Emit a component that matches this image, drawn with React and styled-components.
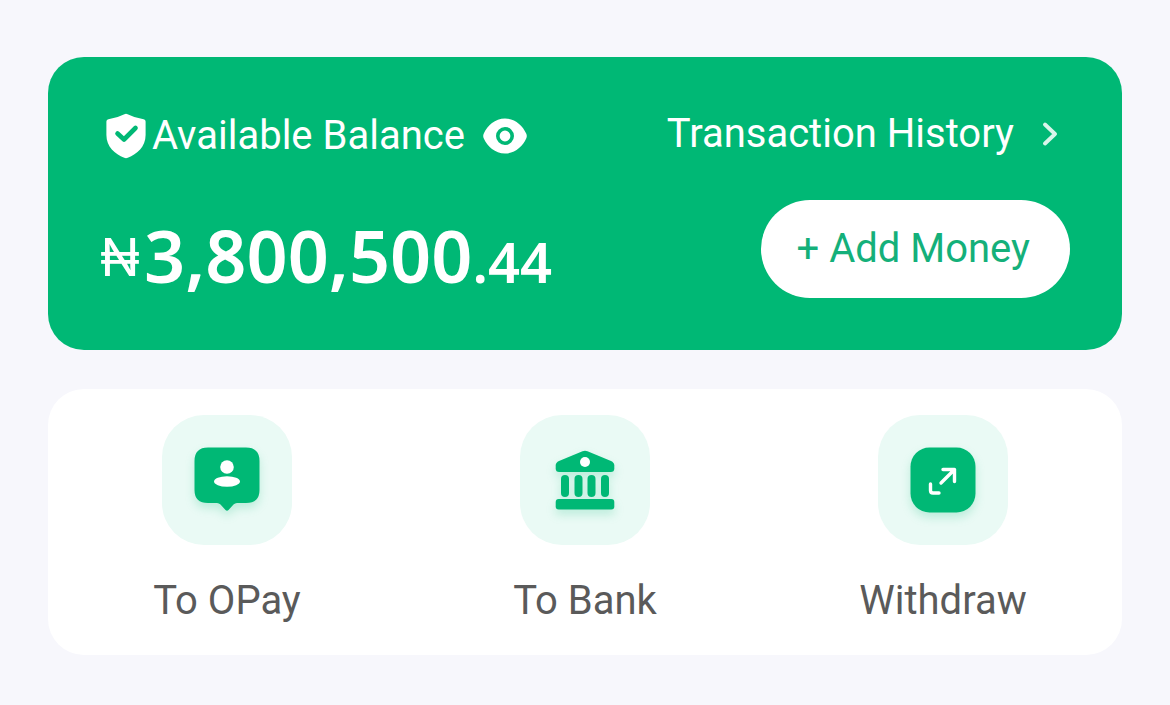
import { useState } from 'react';
import styled, { createGlobalStyle, css } from 'styled-components';

const GlobalStyle = createGlobalStyle`
	:root {
		--color-brand: #00b875;
		--color-brand-text: #14b07a;
		--color-brand-tint: #eafaf5;
		--color-page: #f7f7fc;
		--color-label: #5a5a5a;
		--radius-card: 36px;
	}

	* {
		box-sizing: border-box;
	}

	body {
		margin: 0;
		background-color: var(--color-page);
		font-family: Roboto, 'Liberation Sans', sans-serif;
		font-size: 40px;
		line-height: 48px;
	}

	button {
		font: inherit;
		border: none;
		padding: 0;
		background: none;
		cursor: pointer;
	}
`;

const Page = styled.main`
	display: flex;
	flex-direction: column;
	gap: 39px;
	padding: 57px 48px 50px;
`;

const BalanceCard = styled.section`
	display: flex;
	flex-direction: column;
	gap: 36px;
	padding: 51px 52px 52px;
	border-radius: var(--radius-card);
	background-color: var(--color-brand);
	color: #fff;
`;

const CardRow = styled.div`
	display: flex;
	align-items: flex-end;
	justify-content: space-between;

	${(props) =>
		props.$inset &&
		css`
			align-items: center;
			min-height: 56px;
			padding: 0 12px 0 6px;
		`}
`;

const BalanceLabel = styled.div`
	display: flex;
	align-items: center;
	gap: 6px;
`;

const EyeButton = styled.button`
	display: flex;
	margin-left: 12px;
`;

const HistoryLink = styled.a`
	display: flex;
	align-items: center;
	gap: 28px;
	padding-bottom: 4px;
	color: inherit;
	text-decoration: none;
`;

const Amount = styled.p`
	display: flex;
	align-items: baseline;
	margin: 0;
	font-family: 'Noto Sans', 'Open Sans', sans-serif;
	font-size: 72px;
	line-height: 74px;
	font-weight: 600;
`;

const Currency = styled.span`
	align-self: center;
	margin-right: 4px;
	font-family: Inter, sans-serif;
	font-size: 52px;
	font-weight: 400;
`;

const Cents = styled.span`
	font-size: 56px;
`;

const AddMoney = styled.button`
	padding: 25px 40px 25px 36px;
	border-radius: 49px;
	background-color: #fff;
	color: var(--color-brand-text);
`;

const Actions = styled.nav`
	display: grid;
	grid-template-columns: repeat(3, 1fr);
	padding: 26px 0 30px;
	border-radius: var(--radius-card);
	background-color: #fff;
`;

const Action = styled.a`
	display: flex;
	flex-direction: column;
	align-items: center;
	gap: 32px;
	color: var(--color-label);
	text-decoration: none;
`;

const Tile = styled.span`
	display: grid;
	place-items: center;
	width: 130px;
	height: 130px;
	border-radius: 42px;
	background-color: var(--color-brand-tint);

	& svg {
		filter: drop-shadow(0 5px 5px rgba(0, 184, 117, 0.2));
	}
`;

function ShieldIcon() {
	return (
		<svg width="40" height="46" viewBox="0 0 40 46" aria-hidden="true">
			<path
				fill="#fff"
				d="M18.4 1.2Q20 .4 21.6 1.2Q29 5 37.6 6.2Q39.6 6.6 39.6 8.6V22C39.6 34 31 41 21.8 44.8Q20 45.6 18.2 44.8C9 41 .4 34 .4 22V8.6Q.4 6.6 2.4 6.2Q11 5 18.4 1.2Z"
			/>
			<path
				d="M11.5 20.5L18 26.5L29.5 15"
				fill="none"
				stroke="var(--color-brand)"
				strokeWidth="4.6"
				strokeLinecap="round"
				strokeLinejoin="round"
			/>
		</svg>
	);
}

function EyeIcon() {
	return (
		<svg width="44" height="36" viewBox="0 0 44 36" aria-hidden="true">
			<path
				fill="#fff"
				d="M22 .5C32 .5 39.5 7.5 43.2 15.5Q44.4 18 43.2 20.5C39.5 28.5 32 35.5 22 35.5S4.5 28.5.8 20.5Q-.4 18 .8 15.5C4.5 7.5 12 .5 22 .5Z"
			/>
			<circle cx="22" cy="18" r="7.2" fill="none" stroke="var(--color-brand)" strokeWidth="3.6" />
		</svg>
	);
}

function ChevronIcon() {
	return (
		<svg width="16" height="24" viewBox="0 0 16 24" aria-hidden="true">
			<path
				d="M3 2.5L13 12L3 21.5"
				fill="none"
				stroke="#fff"
				strokeOpacity="0.85"
				strokeWidth="3.8"
				strokeLinecap="round"
				strokeLinejoin="round"
			/>
		</svg>
	);
}

function OpayIcon() {
	return (
		<svg width="66" height="66" viewBox="0 0 66 66" aria-hidden="true">
			<path
				fill="var(--color-brand)"
				d="M14 .5H52Q65.5 .5 65.5 14V43Q65.5 56 52 56H43Q41 56 39.5 57.5L34.5 63Q33 64.5 31.5 63L26.5 57.5Q25 56 23 56H14Q.5 56 .5 43V14Q.5 .5 14 .5Z"
			/>
			<circle cx="33" cy="20" r="6.8" fill="#fff" />
			<ellipse cx="33" cy="34.5" rx="13" ry="5.2" fill="#fff" />
		</svg>
	);
}

function BankIcon() {
	return (
		<svg width="60" height="60" viewBox="0 0 60 60" aria-hidden="true">
			<g fill="var(--color-brand)">
				<path d="M27.5 1.3Q30 .3 32.5 1.3L56 11Q59.3 12.5 59.3 15.5V18.5Q59.3 22 55.8 22H4.2Q.7 22 .7 18.5V15.5Q.7 12.5 4 11Z" />
				<rect x="6" y="25" width="8" height="22" rx="4" />
				<rect x="19.5" y="25" width="8" height="22" rx="4" />
				<rect x="32.5" y="25" width="8" height="22" rx="4" />
				<rect x="46" y="25" width="8" height="22" rx="4" />
				<rect x=".7" y="49" width="58.6" height="10.5" rx="3" />
			</g>
			<circle cx="30" cy="12" r="5" fill="#fff" />
		</svg>
	);
}

function WithdrawIcon() {
	return (
		<svg width="66" height="66" viewBox="0 0 66 66" aria-hidden="true">
			<rect x=".5" y=".5" width="65" height="65" rx="19" fill="var(--color-brand)" />
			<g fill="none" stroke="#fff" strokeWidth="3.4" strokeLinecap="round" strokeLinejoin="round">
				<path d="M33 22.5H44.5V34.5M44.5 22.5L31 36" />
				<path d="M20.5 37V43.5Q20.5 46 23 46H29" />
			</g>
		</svg>
	);
}

const actions = [
	{ label: 'To OPay', href: '#opay', Icon: OpayIcon },
	{ label: 'To Bank', href: '#bank', Icon: BankIcon },
	{ label: 'Withdraw', href: '#withdraw', Icon: WithdrawIcon },
];

function Balance() {
	const [visible, setVisible] = useState(true);

	return (
		<BalanceCard>
			<CardRow $inset>
				<BalanceLabel>
					<ShieldIcon />
					<span>Available Balance</span>
					<EyeButton aria-label="Toggle balance" onClick={() => setVisible((v) => !v)}>
						<EyeIcon />
					</EyeButton>
				</BalanceLabel>
				<HistoryLink href="#history">
					Transaction History
					<ChevronIcon />
				</HistoryLink>
			</CardRow>
			<CardRow>
				<Amount>
					{visible ? (
						<>
							<Currency>₦</Currency>
							<span>3,800,500</span>
							<Cents>.44</Cents>
						</>
					) : (
						'****'
					)}
				</Amount>
				<AddMoney>+ Add Money</AddMoney>
			</CardRow>
		</BalanceCard>
	);
}

function App() {
	return (
		<>
			<GlobalStyle />
			<Page>
				<Balance />
				<Actions>
					{actions.map(({ label, href, Icon }) => (
						<Action key={label} href={href}>
							<Tile>
								<Icon />
							</Tile>
							{label}
						</Action>
					))}
				</Actions>
			</Page>
		</>
	);
}

export default App;
